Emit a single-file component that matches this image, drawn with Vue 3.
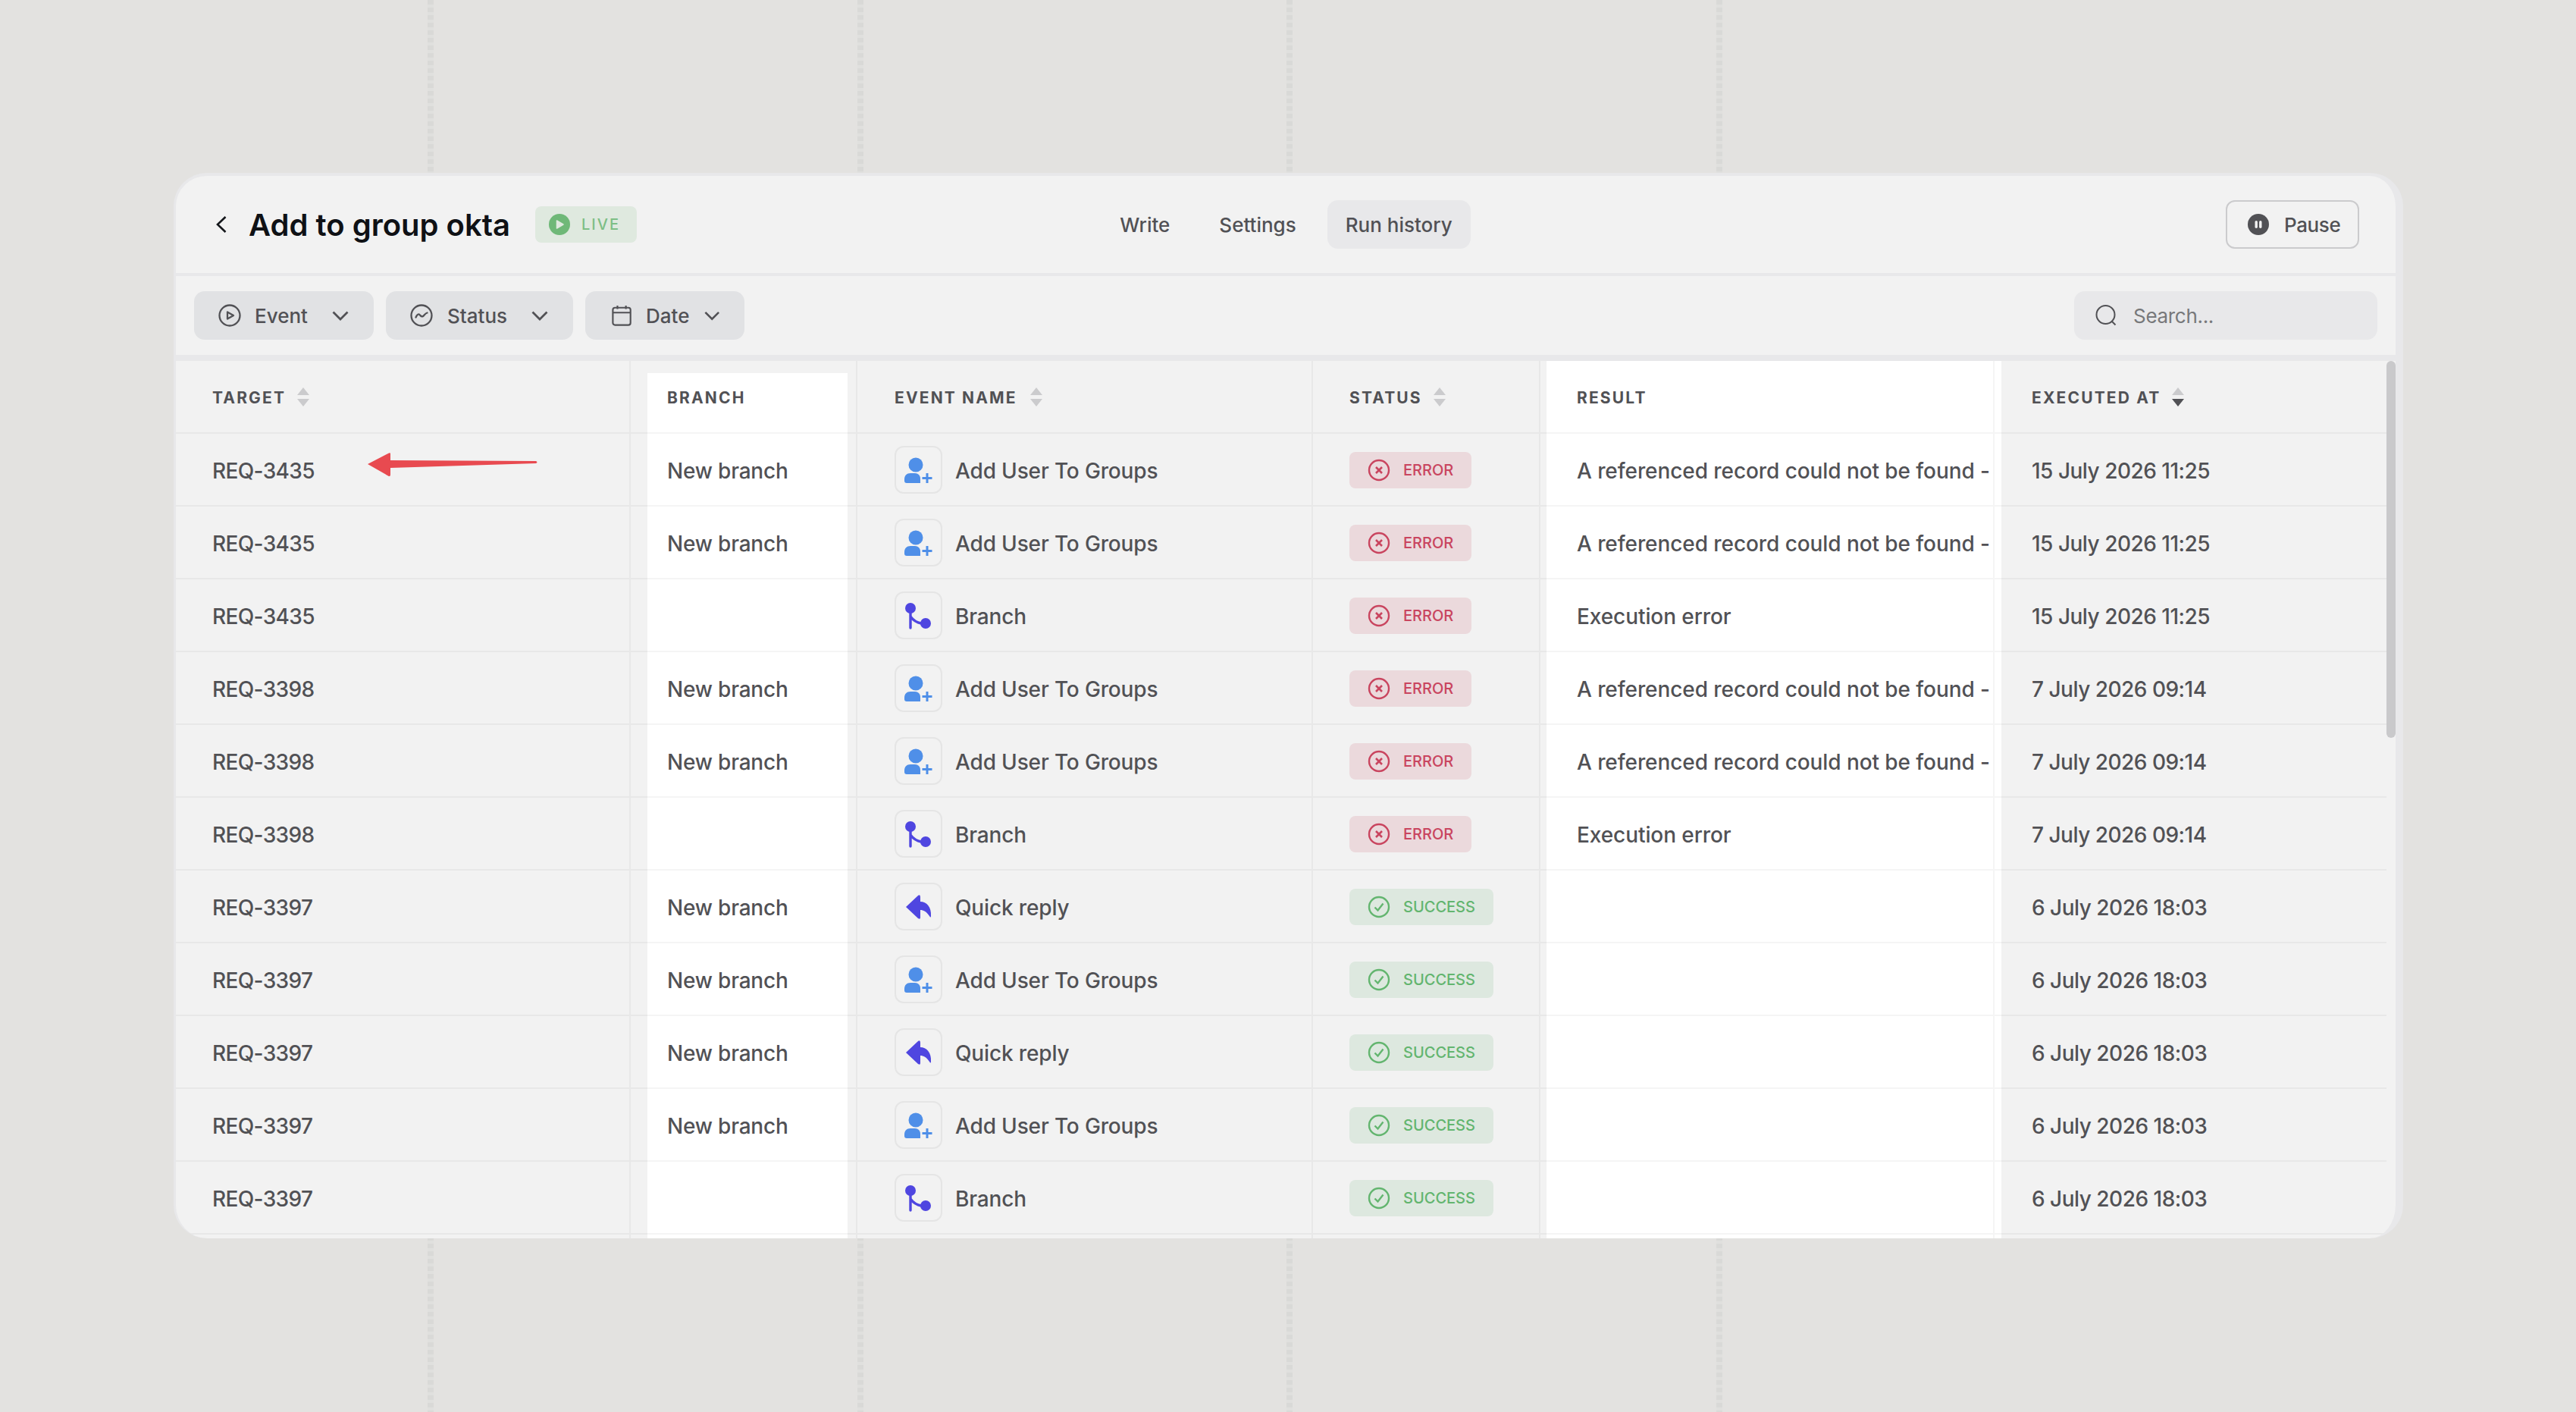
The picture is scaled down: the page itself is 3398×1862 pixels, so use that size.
<script setup>
const A = 'Add User To Groups'
const Q = 'Quick reply'
const B = 'Branch'
const REF = 'A referenced record could not be found -'
const EX = 'Execution error'
const rows = [
  ['REQ-3435', 'New branch', 'user', A, 'err', REF, '15 July 2026 11:25'],
  ['REQ-3435', 'New branch', 'user', A, 'err', REF, '15 July 2026 11:25'],
  ['REQ-3435', '', 'branch', B, 'err', EX, '15 July 2026 11:25'],
  ['REQ-3398', 'New branch', 'user', A, 'err', REF, '7 July 2026 09:14'],
  ['REQ-3398', 'New branch', 'user', A, 'err', REF, '7 July 2026 09:14'],
  ['REQ-3398', '', 'branch', B, 'err', EX, '7 July 2026 09:14'],
  ['REQ-3397', 'New branch', 'reply', Q, 'ok', '', '6 July 2026 18:03'],
  ['REQ-3397', 'New branch', 'user', A, 'ok', '', '6 July 2026 18:03'],
  ['REQ-3397', 'New branch', 'reply', Q, 'ok', '', '6 July 2026 18:03'],
  ['REQ-3397', 'New branch', 'user', A, 'ok', '', '6 July 2026 18:03'],
  ['REQ-3397', '', 'branch', B, 'ok', '', '6 July 2026 18:03']
]
const heads = [
  { t: 'TARGET', s: true },
  { t: 'BRANCH', s: false },
  { t: 'EVENT NAME', s: true },
  { t: 'STATUS', s: true },
  { t: 'RESULT', s: false },
  { t: 'EXECUTED AT', s: true, active: true }
]
</script>

<template>
  <div class="page">
    <div class="rails"><i class="rail"></i><i class="rail"></i><i class="rail"></i><i class="rail"></i></div>
    <div class="card">
      <header class="head">
        <div class="head-left">
          <svg class="back" width="16" height="24" viewBox="0 0 16 24"><path d="M13.5 2 3 12l10.5 10" fill="none" stroke="#15171b" stroke-width="2.6"/></svg>
          <h1 class="title">Add to group okta</h1>
          <span class="live">
            <svg width="28" height="28" viewBox="0 0 28 28"><circle cx="14" cy="14" r="14" fill="#6fb878"/><path d="M10.5 9 19 14l-8.500 5z" fill="#dfe9df" stroke="#dfe9df" stroke-width="1.500" stroke-linejoin="round"/></svg>
            LIVE
          </span>
        </div>
        <nav class="tabs">
          <span class="tab">Write</span>
          <span class="tab">Settings</span>
          <span class="tab tab-on">Run history</span>
        </nav>
        <div class="head-right">
          <button class="pause">
            <svg width="28" height="28" viewBox="0 0 28 28"><circle cx="14" cy="14" r="14" fill="#515155"/><rect x="9.500" y="9" width="3.400" height="10" rx="1.700" fill="#f2f2f2"/><rect x="15.100" y="9" width="3.400" height="10" rx="1.700" fill="#f2f2f2"/></svg>
            Pause
          </button>
        </div>
      </header>

      <div class="bar">
        <div class="filter f-event">
          <svg width="30" height="30" viewBox="0 0 30 30" fill="none" stroke="#515155" stroke-width="2.300"><circle cx="15" cy="15" r="13.500"/><path d="M12 10.500 20 15l-8 4.500z" stroke-linejoin="round"/></svg>
          <span>Event</span>
          <svg class="chev" width="22" height="13" viewBox="0 0 22 13"><path d="M1.500 1.500 11 11l9.500-9.500" fill="none" stroke="#515155" stroke-width="2.800"/></svg>
        </div>
        <div class="filter f-status">
          <svg width="30" height="30" viewBox="0 0 30 30" fill="none" stroke="#515155" stroke-width="2.300"><circle cx="15" cy="15" r="13.500"/><path d="M7.500 17.500c1.500-3.500 3.500-5 5-3.500s2.500 3.500 4.500 2 2.500-3.500 5.500-4.500" stroke-linecap="round"/></svg>
          <span>Status</span>
          <svg class="chev" width="22" height="13" viewBox="0 0 22 13"><path d="M1.500 1.500 11 11l9.500-9.500" fill="none" stroke="#515155" stroke-width="2.800"/></svg>
        </div>
        <div class="filter f-date">
          <svg width="28" height="30" viewBox="0 0 28 30" fill="none" stroke="#515155" stroke-width="2.300"><rect x="1.500" y="4" width="25" height="24.500" rx="3"/><path d="M1.500 11h25M8 1v5M20 1v5"/></svg>
          <span>Date</span>
          <svg class="chev" width="22" height="13" viewBox="0 0 22 13"><path d="M1.500 1.500 11 11l9.500-9.500" fill="none" stroke="#515155" stroke-width="2.800"/></svg>
        </div>
        <div class="search">
          <svg width="28" height="30" viewBox="0 0 28 30" fill="none" stroke="#515155" stroke-width="2"><circle cx="13.500" cy="14" r="12"/><path d="m22 23 4.500 4.500"/></svg>
          <span>Search...</span>
        </div>
      </div>

      <div class="table">
        <div class="hl hl-branch"></div>
        <div class="hl hl-result"></div>
        <div class="scroll"></div>
        <div class="row row-head">
          <div v-for="h in heads" :key="h.t" class="cell th">
            <span>{{ h.t }}</span>
            <svg v-if="h.s" class="sort" width="16" height="25" viewBox="0 0 16 25">
              <path d="M8 0l8 10H0z" fill="#cbcbcd"/>
              <path d="M8 25l8-10H0z" :fill="h.active ? '#515155' : '#cbcbcd'"/>
            </svg>
          </div>
        </div>
        <div v-for="(r, i) in rows" :key="i" class="row">
          <div class="cell target">{{ r[0] }}</div>
          <div class="cell branch">{{ r[1] }}</div>
          <div class="cell ev">
            <span class="ibox">
              <svg v-if="r[2] === 'user'" width="59" height="59" viewBox="2 2 59 59">
                <circle cx="28" cy="25" r="9.500" fill="#4f8fe8"/>
                <path d="M13 44c0-5 3-8 8-8h6c4 0 7 3 7 7v6H16c-2 0-3-1-3-3z" fill="#4f8fe8"/>
                <path d="M43 36v13M36.500 42.500h13" stroke="#4f8fe8" stroke-width="3" fill="none"/>
              </svg>
              <svg v-else-if="r[2] === 'branch'" width="59" height="59" viewBox="2 2 59 59">
                <circle cx="21" cy="22" r="7" fill="#4f46e0"/>
                <circle cx="41" cy="42" r="7" fill="#4f46e0"/>
                <path d="M21 24v24M21 33c3 4 8 8 14 9" fill="none" stroke="#4f46e0" stroke-width="3.400" stroke-linecap="round"/>
              </svg>
              <svg v-else width="59" height="59" viewBox="2 2 59 59">
                <path d="M15 32 31 17q3-2 3 2v6c8 0 15 7 14 19q0 3-2 0c-4-6-8-8-12-8v10q0 3-3 1z" fill="#4f46e0"/>
              </svg>
            </span>
            {{ r[3] }}
          </div>
          <div class="cell">
            <span v-if="r[4] === 'err'" class="badge badge-err">
              <svg width="30" height="30" viewBox="0 0 30 30" fill="none" stroke="#c9455f" stroke-width="2.400"><circle cx="15" cy="15" r="13"/><path d="m11 11 8 8m0-8-8 8" stroke-width="2.600"/></svg>
              ERROR
            </span>
            <span v-else class="badge badge-ok">
              <svg width="30" height="30" viewBox="0 0 30 30" fill="none" stroke="#63b56f" stroke-width="2.400"><circle cx="15" cy="15" r="13"/><path d="m9.500 15.500 4 4 7-9"/></svg>
              SUCCESS
            </span>
          </div>
          <div class="cell result">{{ r[5] }}</div>
          <div class="cell date">{{ r[6] }}</div>
        </div>
        <div class="row">
          <div class="cell"></div><div class="cell"></div><div class="cell"></div><div class="cell"></div><div class="cell"></div><div class="cell"></div>
        </div>
        <svg class="arrow" width="240" height="50" viewBox="0 0 240 50">
          <path d="M4 27 32 12.500q2-1 2 1V22L226 23q3 1.500 0 3L34 32v9q0 3-3 1.500z" fill="#e84a50"/>
        </svg>
      </div>
    </div>
  </div>
</template>

<style>
html, body { margin: 0; background: #e3e2e0; }
</style>

<style scoped>
.page {
  position: relative;
  width: 3398px;
  height: 1862px;
  padding: 228px 0 0 229px;
  box-sizing: border-box;
  overflow: hidden;
  background: #e3e2e0;
  font-family: Inter, "Liberation Sans", sans-serif;
  color: #515155;
}
.rails {
  position: absolute;
  inset: 0;
  display: flex;
  gap: 558.500px;
  padding-left: 564px;
}
.rail {
  width: 8px;
  height: 100%;
  background: repeating-linear-gradient(180deg, #d9d9d7 0 6px, #e0e0de 6px 10px);
}
.card {
  position: relative;
  width: 2941px;
  height: 1405px;
  box-sizing: border-box;
  overflow: hidden;
  background: #f2f2f2;
  border-style: solid;
  border-color: #e8e8ea;
  border-width: 4px 10px 0 3px;
  border-radius: 44px;
}
.head {
  display: grid;
  grid-template-columns: 1fr auto 1fr;
  align-items: center;
  height: 128px;
  padding: 0 48px 0 52px;
  border-bottom: 4px solid #e8e8ea;
}
.head-left { display: flex; align-items: center; }
.back { margin-right: 28px; }
.title {
  margin: 0 33px 0 0;
  font-size: 40px;
  font-weight: 600;
  color: #0f1115;
  white-space: nowrap;
}
.live {
  display: inline-flex;
  align-items: center;
  gap: 15px;
  width: 134px;
  height: 48px;
  padding-left: 18px;
  box-sizing: border-box;
  background: #dfe9df;
  border-radius: 8px;
  color: #7dbe85;
  font-size: 20px;
  font-weight: 500;
  letter-spacing: 2px;
}
.tabs { display: flex; gap: 17px; margin-left: -3px; }
.tab {
  display: flex;
  align-items: center;
  height: 64px;
  padding: 0 24px;
  border-radius: 14px;
  font-size: 26px;
  font-weight: 500;
}
.tab-on { background: #e8e8ea; }
.head-right { display: flex; justify-content: flex-end; }
.pause {
  display: flex;
  align-items: center;
  gap: 20px;
  width: 176px;
  height: 64px;
  padding: 0 0 0 27px;
  box-sizing: border-box;
  background: transparent;
  border: 2px solid #cbcbcd;
  border-radius: 12px;
  color: #515155;
  font: 500 26px Inter, "Liberation Sans", sans-serif;
  letter-spacing: -0.4px;
}
.bar {
  display: flex;
  align-items: center;
  gap: 16px;
  height: 104px;
  padding: 0 24px 0 24px;
  border-bottom: 8px solid #e8e8ea;
}
.filter {
  display: flex;
  align-items: center;
  gap: 19px;
  height: 64px;
  padding: 0 33px 0 32px;
  box-sizing: border-box;
  background: #e1e2e4;
  border-radius: 14px;
  font-size: 26px;
  font-weight: 500;
}
.f-event { width: 237px; gap: 18px; }
.f-status { width: 247px; }
.f-date { width: 210px; padding-left: 35px; }
.chev { margin-left: auto; }
.search {
  display: flex;
  align-items: center;
  gap: 22px;
  width: 400px;
  height: 64px;
  margin-left: auto;
  padding-left: 28px;
  box-sizing: border-box;
  background: #e8e8ea;
  border-radius: 14px;
  font-size: 26px;
  letter-spacing: -0.3px;
  color: #77787a;
}
.table { position: relative; height: 1165px; overflow: hidden; }
.hl { position: absolute; background: #fff; }
.hl-branch { left: 622px; top: 16px; width: 264px; bottom: 7px; }
.hl-result { left: 1808px; top: 0; width: 600px; bottom: 0; }
.scroll {
  position: absolute;
  right: 0;
  top: 0;
  width: 12px;
  height: 497px;
  border-radius: 6px;
  background: #c9c9cb;
}
.row {
  position: relative;
  display: grid;
  grid-template-columns: 600px 299px 601px 300px 599px 517px;
  width: 2916px;
  height: 96px;
  box-sizing: border-box;
  border-bottom: 2px solid rgba(0, 0, 0, 0.04);
}
.cell {
  display: flex;
  align-items: center;
  min-width: 0;
  padding: 3px 0 0 48px;
  box-sizing: border-box;
  overflow: hidden;
  border-right: 2px solid rgba(0, 0, 0, 0.04);
  font-size: 28px;
  font-weight: 500;
  white-space: nowrap;
}
.cell:nth-child(3), .cell:nth-child(6) { padding-left: 49px; }
.row .cell:last-child { border-right: 0; }
.th {
  gap: 15px;
  font-size: 21px;
  font-weight: 700;
  letter-spacing: 2.150px;
}
.th:nth-child(3) { gap: 17px; }
.sort { margin-top: -3px; }
.target { letter-spacing: -0.65px; }
.branch { letter-spacing: -0.2px; }
.date { letter-spacing: -0.5px; }
.result { padding-right: 6px; letter-spacing: -0.08px; }
.ev { gap: 17px; letter-spacing: -0.15px; }
.ibox {
  display: flex;
  flex: none;
  width: 63px;
  height: 63px;
  margin-top: -3px;
  box-sizing: border-box;
  border: 2px solid #e5e5e5;
  border-radius: 12px;
}
.badge {
  display: inline-flex;
  align-items: center;
  gap: 17px;
  height: 48px;
  margin-top: -2px;
  padding: 0 24px 0 24px;
  border-radius: 8px;
  font-size: 20px;
  font-weight: 500;
  letter-spacing: 0;
}
.badge-err { background: #ebd9dc; color: #c9455f; }
.badge-ok { background: #dde8df; color: #63b56f; }
.arrow { position: absolute; left: 249px; top: 109px; }
</style>
